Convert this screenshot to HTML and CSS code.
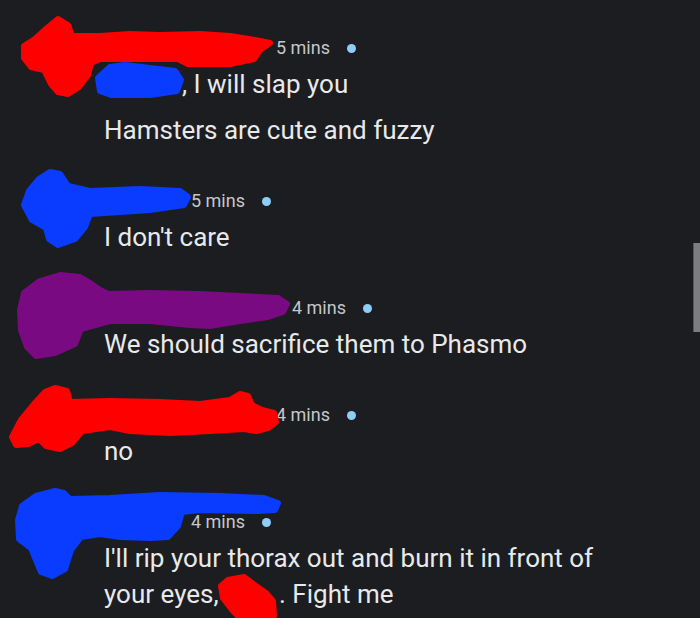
FILE: index.html
```html
<!DOCTYPE html>
<html lang="en">
<head>
    <meta charset="UTF-8">
    <meta name="viewport" content="width=device-width, initial-scale=1.0">
    <title>Comments</title>
    <link rel="stylesheet" href="styles.css">
</head>
<body>
    <div class="feed">
        <div class="comment">
            <div class="avatar"></div>
            <div class="body">
                <div class="head"><span class="name n-long"></span><span class="time">5 mins</span><span class="dot"></span></div>
                <p class="msg"><span class="mention m-first"></span>, I will slap you</p>
                <p class="msg">Hamsters are cute and fuzzy</p>
            </div>
        </div>
        <div class="comment">
            <div class="avatar"></div>
            <div class="body">
                <div class="head"><span class="name n-short"></span><span class="time">5 mins</span><span class="dot"></span></div>
                <p class="msg">I don't care</p>
            </div>
        </div>
        <div class="comment">
            <div class="avatar"></div>
            <div class="body">
                <div class="head"><span class="name n-longest"></span><span class="time">4 mins</span><span class="dot"></span></div>
                <p class="msg">We should sacrifice them to Phasmo</p>
            </div>
        </div>
        <div class="comment">
            <div class="avatar"></div>
            <div class="body">
                <div class="head"><span class="name n-long"></span><span class="time">4 mins</span><span class="dot"></span></div>
                <p class="msg">no</p>
            </div>
        </div>
        <div class="comment">
            <div class="avatar"></div>
            <div class="body">
                <div class="head"><span class="name n-short"></span><span class="time">4 mins</span><span class="dot"></span></div>
                <p class="msg">I'll rip your thorax out and burn it in front of your eyes, <span class="mention m-last"></span>. Fight me</p>
            </div>
        </div>
    </div>

    <!-- marker scribbles over names -->
    <svg class="scribbles" width="700" height="618" viewBox="0 0 700 618" stroke-width="6" stroke-linejoin="round">
        <path fill="#ff0000" stroke="#ff0000" d="M58 19 L68 25 L72 36 L100 36 L130 34 L160 35 L200 34 L230 36 L255 40 L270 43 L260 50 L254 59 L230 64 L188 64 L178 59 L140 59 L100 59 L91 63 L88 75 L79 87 L68 94 L58 92 L51 84 L44 70 L31 67 L24 58 L24 46 L35 39 L47 28 Z"/>
        <path fill="#0a3cff" stroke="#0a3cff" d="M110 67 L125 65 L150 68 L175 71 L181 80 L177 91 L150 95 L111 95 L100 91 L98 78 Z"/>
        <path fill="#0a3cff" stroke="#0a3cff" d="M50 172 L60 174 L68 186 L90 191 L140 189 L180 191 L188 197 L184 205 L150 210 L120 212 L90 214 L85 227 L75 239 L58 245 L49 239 L46 228 L32 220 L24 205 L29 191 L39 179 Z"/>
        <path fill="#7a0a82" stroke="#7a0a82" d="M40 281 L60 275 L80 277 L90 283 L100 290 L108 294 L150 293 L200 294 L240 296 L278 298 L287 304 L283 312 L268 317 L240 321 L210 326 L190 325 L150 321 L110 321 L81 329 L75 344 L55 353 L36 356 L27 347 L21 330 L20 310 L24 293 Z"/>
        <path fill="#ff0000" stroke="#ff0000" d="M55 388 L67 391 L70 402 L110 401 L160 402 L200 404 L230 400 L240 394 L248 396 L252 405 L262 410 L274 413 L276 422 L268 428 L256 431 L244 429 L210 431 L170 433 L130 431 L110 427 L82 431 L72 443 L60 449 L46 446 L39 439 L28 444 L16 445 L12 437 L21 420 L35 403 L45 392 Z"/>
        <path fill="#0a3cff" stroke="#0a3cff" d="M55 491 L64 493 L70 499 L110 498 L160 495 L220 496 L264 498 L278 503 L275 510 L258 511 L200 510 L182 512 L178 526 L168 537 L150 538 L120 537 L100 534 L81 537 L71 550 L65 569 L52 576 L41 572 L36 560 L31 548 L19 539 L18 520 L22 506 L36 496 Z"/>
        <path fill="#ff0000" stroke="#ff0000" d="M228 580 L244 577 L256 586 L266 593 L273 601 L274 616 L262 620 L242 620 L233 611 L223 598 L221 586 Z"/>
    </svg>

    <div class="scrollbar"></div>
</body>
</html>
```

FILE: styles.css
```css
:root {
    --bg: #1b1d20;
    --text: #e8e9eb;
    --muted: #c6c7ca;
    --unread: #8fcdf6;
}
body, html {
    margin: 0;
    height: 100%;
    overflow: hidden;
    background-color: var(--bg);
    font-family: Roboto, 'Noto Sans', Arial, sans-serif;
    color: var(--text);
}
body {
    position: relative;
}
.feed {
    padding-top: 30px;
    display: flex;
    flex-direction: column;
    gap: 35px;
}
.comment {
    display: flex;
}
.avatar {
    width: 48px;
    height: 48px;
    margin: 10px 32px 0 24px;
    border-radius: 50%;
    background-color: var(--bg);
    flex-shrink: 0;
}
.body {
    width: 530px;
}
.head {
    display: flex;
    align-items: center;
    height: 36px;
    font-size: 18px;
    line-height: 36px;
}
.name {
    display: inline-block;
    height: 20px;
    margin-right: 6px;
}
.n-short { width: 81px; }
.n-long { width: 166px; }
.n-longest { width: 182px; }
.time {
    color: var(--muted);
}
.dot {
    width: 9px;
    height: 9px;
    margin-left: 17px;
    border-radius: 50%;
    background-color: var(--unread);
}
.msg {
    margin: 0;
    font-size: 26px;
    line-height: 36px;
}
.msg + .msg {
    margin-top: 10px;
}
.mention {
    display: inline-block;
    height: 20px;
}
.m-first { width: 78px; }
.m-last { width: 54px; }
.scribbles {
    position: absolute;
    top: 0;
    left: 0;
    pointer-events: none;
}
.scrollbar {
    position: absolute;
    top: 243px;
    right: 0;
    width: 6px;
    height: 89px;
    background-color: #7c7d80;
    border-left: 1px solid #55575a;
}
```
